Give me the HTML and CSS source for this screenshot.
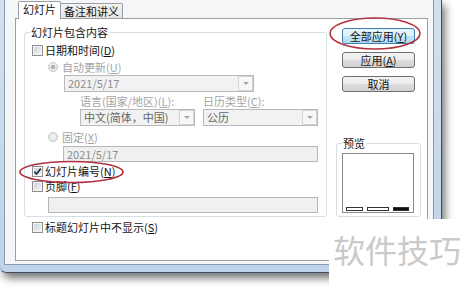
FILE: index.html
```html
<!DOCTYPE html>
<html>
  <head>
    <meta charset="utf-8">
    <title>页眉和页脚</title>
    <link rel="stylesheet" href="styles.css">
  </head>
  <body>
    <div id="window">
      <div id="client">
        <div id="tabs">
          <div class="tab selected">幻灯片</div>
          <div class="tab">备注和讲义</div>
        </div>

        <div id="page">
          <div id="left_col">
            <div class="group" id="content_group">
              <div class="group_title">幻灯片包含内容</div>
              <div class="row first_row"><span class="check"></span>日期和时间(<u>D</u>)</div>
              <div class="row radio_row disabled"><span class="radio on"></span>自动更新(<u>U</u>)</div>
              <div class="combo date_combo"><span class="value">2021/5/17</span><span class="drop"></span></div>
              <div class="row label_row disabled">
                <span class="lang_label">语言(国家/地区)(<u>L</u>):</span>
                <span>日历类型(<u>C</u>):</span>
              </div>
              <div class="combo_pair">
                <div class="combo half_combo"><span class="value">中文(简体，中国)</span><span class="drop"></span></div>
                <div class="combo half_combo"><span class="value">公历</span><span class="drop"></span></div>
              </div>
              <div class="row radio_row fixed_row disabled"><span class="radio"></span>固定(<u>X</u>)</div>
              <div class="field fixed_field">2021/5/17</div>
              <div class="row number_row"><span class="check"><svg width="9" height="9" viewBox="0 0 9 9"><path d="M1.3 4.6 L3.5 7 L7.8 1.6" fill="none" stroke="#1f2e4a" stroke-width="1.7"/></svg></span>幻灯片编号(<u>N</u>)</div>
              <div class="row footer_row"><span class="check"></span>页脚(<u>F</u>)</div>
              <div class="field footer_field"></div>
            </div>
            <div class="row title_row"><span class="check"></span>标题幻灯片中不显示(<u>S</u>)</div>
          </div>

          <div id="right_col">
            <div class="button default">全部应用(<u>Y</u>)</div>
            <div class="button">应用(<u>A</u>)</div>
            <div class="button">取消</div>
            <div class="group" id="preview_group">
              <div class="group_title">预览</div>
              <div id="preview">
                <span class="bar"></span>
                <span class="bar wide"></span>
                <span class="bar dark"></span>
              </div>
            </div>
          </div>
        </div>
      </div>
    </div>

    <!-- red marks drawn over the dialog -->
    <svg id="marks" width="469" height="289" viewBox="0 0 469 289">
      <ellipse cx="375" cy="33.5" rx="45" ry="15.5" fill="none" stroke="#b2313f" stroke-width="1.6"/>
      <ellipse cx="71.5" cy="172" rx="51.5" ry="10.5" fill="none" stroke="#b2313f" stroke-width="1.6"/>
    </svg>

    <div id="watermark">软件技巧</div>
  </body>
</html>
```

FILE: styles.css
```css
body {
  position: relative;
  width: 469px;
  height: 289px;
  margin: 0;
  overflow: hidden;
  background-color: #ffffff;
  font-family: "Noto Sans CJK SC", sans-serif;
  font-size: 11px;
  color: #141414;
}
div {
  box-sizing: border-box;
}
u {
  text-decoration: underline;
  text-underline-offset: 1px;
}

/* window frame */
#window {
  display: flex;
  width: 442px;
  height: 273px;
  padding: 0 7px 7px 4px;
  border-right: 1px solid #3f4f60;
  border-bottom: 1px solid #3f4f60;
  border-radius: 0 0 6px 6px;
  background: linear-gradient(to bottom, #d3e1ee, #bdd3ea);
  box-shadow: 3px 5px 8px rgba(0, 0, 0, 0.55);
}
#client {
  display: flex;
  flex-direction: column;
  width: 430px;
  height: 265px;
  padding: 1px 5px 3px 10px;
  border: 1px solid #8a9bb0;
  border-top: 0;
  background-color: #f5f6f7;
}

/* tabs */
#tabs {
  display: flex;
  align-items: flex-end;
  height: 17px;
  padding-left: 3px;
}
.tab {
  height: 15px;
  margin-left: -1px;
  padding: 0 3px;
  border: 1px solid #9a9ea6;
  border-bottom: 0;
  border-radius: 2px 2px 0 0;
  background: linear-gradient(#f4f4f4, #e4e4e4);
  line-height: 14px;
  white-space: nowrap;
}
.tab.selected {
  position: relative;
  z-index: 1;
  height: 18px;
  margin-left: 0;
  margin-bottom: -1px;
  padding: 0 4px;
  background: #ffffff;
  line-height: 15px;
}
#page {
  flex: 1;
  display: flex;
  padding: 9px 0 0 8px;
  border: 1px solid #9a9ea6;
  background-color: #ffffff;
}

/* group boxes */
.group {
  display: flex;
  flex-direction: column;
  border: 1px solid #d5dfe5;
  border-radius: 3px;
}
.group_title {
  align-self: flex-start;
  height: 13px;
  margin: -7px 0 0 -2px;
  padding: 0 1px;
  background-color: #ffffff;
  line-height: 13px;
  white-space: nowrap;
}
#left_col {
  display: flex;
  flex-direction: column;
  width: 303px;
  padding-top: 4px;
}
#content_group {
  padding: 0 0 3px 7px;
}

/* rows */
.row {
  display: flex;
  align-items: center;
  height: 13px;
  line-height: 13px;
  white-space: nowrap;
}
.disabled {
  color: #a3a3a3;
}
.first_row {
  margin-top: 5px;
}
.radio_row {
  height: 12px;
  margin: 4px 0 0 16px;
}
.fixed_row {
  margin-top: 5px;
}
.label_row {
  height: 12px;
  margin: 3px 0 0 48px;
}
.lang_label {
  width: 123px;
}
.number_row {
  margin-top: 3px;
}
.footer_row {
  margin-top: 2px;
}
.title_row {
  margin: 4px 0 0 8px;
}

/* checkbox and radio */
.check {
  display: flex;
  align-items: center;
  justify-content: center;
  flex: none;
  box-sizing: border-box;
  width: 11px;
  height: 11px;
  margin-right: 2px;
  border: 1px solid #8e8f8f;
  background: linear-gradient(135deg, #c9ced4, #f8f8f8);
  box-shadow: inset 0 0 0 1px #f6f6f6;
}
.radio {
  flex: none;
  box-sizing: border-box;
  width: 10px;
  height: 10px;
  margin-right: 4px;
  border: 1px solid #c4c4c4;
  border-radius: 50%;
  background: radial-gradient(circle, #f4f4f4, #dedede);
}
.radio.on {
  background: radial-gradient(circle, #b4b4b4 0, #b4b4b4 2px, #ececec 2.6px);
}

/* combos and fields */
.combo {
  display: flex;
  height: 17px;
  padding-left: 3px;
  border: 1px solid #b7babc;
  background-color: #f2f2f2;
  color: #8e8e8e;
  line-height: 15px;
  white-space: nowrap;
}
.combo .value {
  flex: 1;
  overflow: hidden;
}
.drop {
  display: flex;
  align-items: center;
  justify-content: center;
  flex: none;
  box-sizing: border-box;
  width: 15px;
  border: 1px solid #d4d4d4;
  background-color: #f8f8f8;
}
.drop::after {
  content: "";
  border-top: 3px solid #a6a6a6;
  border-left: 3px solid transparent;
  border-right: 3px solid transparent;
}
.date_combo {
  width: 190px;
  margin: 2px 0 0 32px;
}
.combo_pair {
  display: flex;
  gap: 8px;
  margin: 2px 0 0 48px;
}
.half_combo {
  width: 115px;
  color: #666666;
}
.field {
  height: 16px;
  padding-left: 3px;
  border: 1px solid #b7b7b7;
  background-color: #f0f0f0;
  color: #8e8e8e;
  line-height: 14px;
}
.fixed_field {
  width: 255px;
  margin: 3px 0 0 31px;
}
.footer_field {
  width: 270px;
  margin: 4px 0 0 16px;
}

/* buttons and preview */
#right_col {
  display: flex;
  flex-direction: column;
  width: 85px;
  margin-left: 9px;
}
.button {
  width: 73px;
  height: 16px;
  margin: 0 0 8px 6px;
  border: 1px solid #707070;
  border-radius: 3px;
  background: linear-gradient(#f3f3f3, #ebebeb 50%, #dddddd 51%, #d0d0d0);
  line-height: 14px;
  text-align: center;
  white-space: nowrap;
}
.button.default {
  border-color: #3c7fb1;
  background: linear-gradient(#eaf6fd, #d9f0fc 50%, #c4e6f8 51%, #b2ddf3);
}
#preview_group {
  margin-top: 43px;
  padding: 0 0 3px 5px;
}
#preview_group .group_title {
  margin-left: 0;
}
#preview {
  display: flex;
  align-items: flex-end;
  gap: 4px;
  width: 72px;
  height: 60px;
  margin-top: 3px;
  padding: 0 0 1px 3px;
  border: 1px solid #8a8a8a;
  background-color: #ffffff;
}
.bar {
  box-sizing: border-box;
  width: 17px;
  height: 4px;
  border: 1px solid #333333;
  background-color: #ffffff;
}
.bar.wide {
  width: 22px;
}
.bar.dark {
  width: 16px;
  background-color: #111111;
}

/* overlays */
#marks {
  position: absolute;
  left: 0;
  top: 0;
}
#watermark {
  position: absolute;
  left: 329px;
  top: 219px;
  width: 140px;
  height: 70px;
  padding: 14px 0 0 4px;
  background-color: #ffffff;
  color: #cacaca;
  font-size: 32px;
  line-height: 32px;
  white-space: nowrap;
}
```
